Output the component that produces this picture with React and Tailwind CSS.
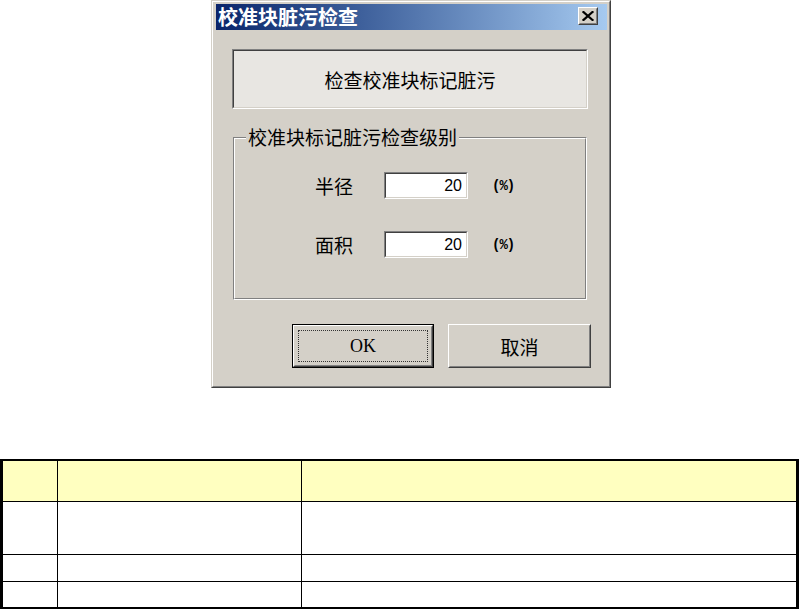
import React from "react";

const cjk = { fontFamily: '"Noto Sans CJK SC", "Noto Sans", sans-serif' };
const mono = { fontFamily: '"Liberation Mono", monospace' };
const serif = { fontFamily: '"Liberation Serif", "Times New Roman", serif' };
const sans = { fontFamily: '"Liberation Sans", Arial, sans-serif' };

function Sunken({ className = "", innerClass = "", children }) {
  return (
    <div className={`border border-t-[#808080] border-l-[#808080] border-r-white border-b-white ${className}`}>
      <div className={`w-full h-full border border-t-[#404040] border-l-[#404040] border-r-[#d4d0c8] border-b-[#d4d0c8] ${innerClass}`}>
        {children}
      </div>
    </div>
  );
}

function Field({ label, value }) {
  return (
    <div className="flex items-center h-[27px]">
      <div className="w-[38px] ml-[80px] text-[19px] leading-none text-black" style={cjk}>{label}</div>
      <Sunken className="ml-[31px] w-[84px] h-[27px]" innerClass="bg-white flex items-center justify-end pr-[4px]">
        <span className="text-[16px] leading-none text-black" style={sans}>{value}</span>
      </Sunken>
      <div className="ml-[24px] text-[14px] leading-none font-bold tracking-[-1px] text-black" style={mono}>(%)</div>
    </div>
  );
}

export default function App() {
  return (
    <div className="w-[799px] h-[610px] bg-white overflow-hidden">
      {/* Dialog */}
      <div className="ml-[211px] w-[400px] h-[388px] border border-t-[#d4d0c8] border-l-[#d4d0c8] border-r-[#404040] border-b-[#404040]">
        <div className="w-full h-full bg-[#d4d0c8] border border-t-white border-l-white border-r-[#808080] border-b-[#808080]">
          {/* Title bar */}
          <div className="mt-[2px] ml-[3px] mr-[2px] h-[26px] bg-gradient-to-r from-[#0a246a] to-[#a6caf0] flex items-start">
            <div className="pl-[2px] pt-[2px] text-[20px] leading-[22px] font-bold text-white" style={cjk}>
              校准块脏污检查
            </div>
            <div className="ml-auto mr-[9px] mt-[3px] w-[20px] h-[18px] border border-t-white border-l-white border-r-[#404040] border-b-[#404040]">
              <div className="w-full h-full bg-[#d4d0c8] border border-t-[#d4d0c8] border-l-[#d4d0c8] border-r-[#808080] border-b-[#808080] flex items-center justify-center">
                <svg width="12" height="10" viewBox="0 0 12 10">
                  <path d="M1.5 1 L10.5 9 M10.5 1 L1.5 9" stroke="#000" strokeWidth="2.2" strokeLinecap="square" />
                </svg>
              </div>
            </div>
          </div>

          {/* Static panel */}
          <Sunken
            className="mt-[19px] ml-[19px] w-[356px] h-[60px]"
            innerClass="flex items-center justify-center bg-[#e8e6e2]"
          >
            <span className="text-[19px] leading-none text-black" style={cjk}>检查校准块标记脏污</span>
          </Sunken>

          {/* Group box */}
          <div className="relative mt-[28px] ml-[20px] w-[354px] h-[163px] border border-t-[#808080] border-l-[#808080] border-r-white border-b-white">
            <div className="w-full h-full border border-t-white border-l-white border-r-[#808080] border-b-[#808080] pt-[33px] flex flex-col gap-[32px]">
              <Field label="半径" value="20" />
              <Field label="面积" value="20" />
            </div>
            <div className="absolute left-[12px] top-[-12px] px-[2px] bg-[#d4d0c8] text-[19px] leading-[22px] text-black" style={cjk}>
              校准块标记脏污检查级别
            </div>
          </div>

          {/* Buttons */}
          <div className="mt-[24px] ml-[79px] flex gap-[14px]">
            <div className="w-[142px] h-[44px] border border-black">
              <div className="w-full h-full border border-t-white border-l-white border-r-[#404040] border-b-[#404040]">
                <div className="w-full h-full border border-t-[#d4d0c8] border-l-[#d4d0c8] border-r-[#808080] border-b-[#808080] p-[3px]">
                  <div className="w-full h-full border border-dotted border-[#333] flex items-center justify-center">
                    <span className="text-[18px] leading-none text-black" style={serif}>OK</span>
                  </div>
                </div>
              </div>
            </div>
            <div className="w-[143px] h-[44px] border border-t-white border-l-white border-r-[#404040] border-b-[#404040]">
              <div className="w-full h-full border border-t-[#d4d0c8] border-l-[#d4d0c8] border-r-[#808080] border-b-[#808080] flex items-center justify-center">
                <span className="text-[19px] leading-none text-black" style={cjk}>取消</span>
              </div>
            </div>
          </div>
        </div>
      </div>

      {/* Table */}
      <div className="mt-[71px] w-[799px] border-t-2 border-b-2 border-x-[3px] border-black">
        <div className="flex h-[41px] bg-[#ffffc0] border-b border-black">
          <div className="w-[55px] border-r border-black" />
          <div className="w-[244px] border-r border-black" />
          <div className="flex-1" />
        </div>
        <div className="flex h-[53px] border-b border-black">
          <div className="w-[55px] border-r border-black" />
          <div className="w-[244px] border-r border-black" />
          <div className="flex-1" />
        </div>
        <div className="flex h-[27px] border-b border-black">
          <div className="w-[55px] border-r border-black" />
          <div className="w-[244px] border-r border-black" />
          <div className="flex-1" />
        </div>
        <div className="flex h-[25px]">
          <div className="w-[55px] border-r border-black" />
          <div className="w-[244px] border-r border-black" />
          <div className="flex-1" />
        </div>
      </div>
    </div>
  );
}
